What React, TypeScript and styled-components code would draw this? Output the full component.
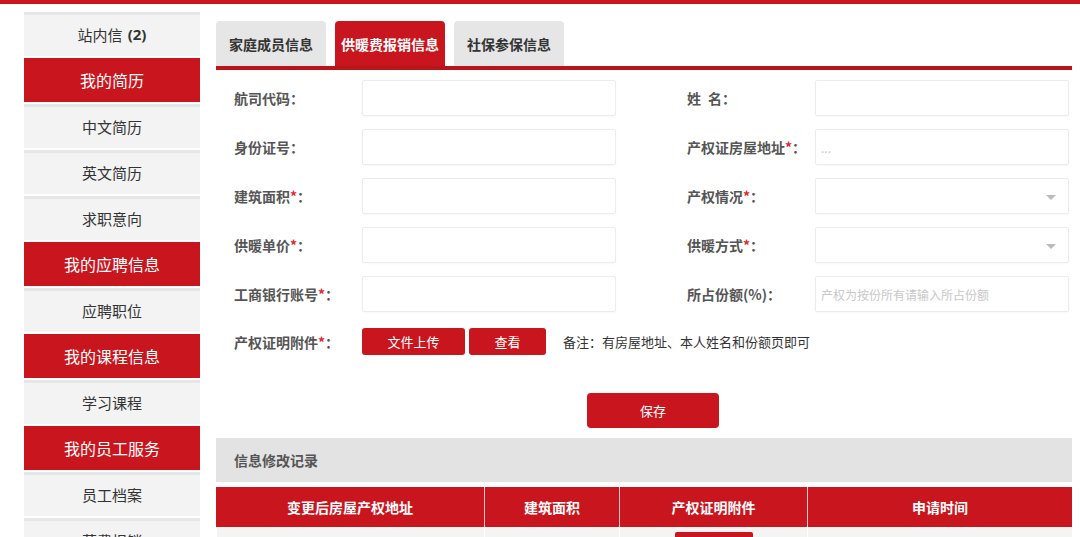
import React from "react";
import styled, { createGlobalStyle } from "styled-components";

const RED = "#c9161e";
const RED_DARK = "#b8141c";

const GlobalStyle = createGlobalStyle`
  body {
    margin: 0;
    background: #fff;
    font-family: "Noto Sans CJK SC", "Noto Sans", "Liberation Sans", sans-serif;
    color: #333;
    overflow: hidden;
  }
  * { box-sizing: border-box; }
`;

const TopBar = styled.div`
  height: 4px;
  background: ${RED};
`;

const Layout = styled.div`
  display: flex;
  gap: 16px;
  padding-left: 24px;
`;

const Sidebar = styled.nav`
  width: 176px;
  flex-shrink: 0;
  display: flex;
  flex-direction: column;
  gap: 2px;
  padding-top: 8px;
`;

const SideItem = styled.div<{ $head?: boolean }>`
  height: 44px;
  display: flex;
  align-items: center;
  justify-content: center;
  font-size: ${(p) => (p.$head ? "16px" : "15px")};
  color: ${(p) => (p.$head ? "#fff" : "#333")};
  background: ${(p) => (p.$head ? RED : "#f3f3f3")};
  box-shadow: ${(p) => (p.$head ? "none" : "inset 0 3px 0 #e6e6e6")};

  b {
    font-weight: 700;
    margin-left: 5px;
    font-family: "Open Sans", "Liberation Sans", sans-serif;
  }
`;

const Main = styled.main`
  width: 856px;
  padding-top: 17px;
`;

const Tabs = styled.div`
  display: flex;
  gap: 9px;
  border-bottom: 4px solid ${RED_DARK};
`;

const Tab = styled.div<{ $active?: boolean }>`
  width: 110px;
  height: 45px;
  display: flex;
  align-items: center;
  justify-content: center;
  border-radius: 4px 4px 0 0;
  font-size: 14px;
  font-weight: 700;
  background: ${(p) => (p.$active ? RED : "#e6e6e6")};
  color: ${(p) => (p.$active ? "#fff" : "#333")};
`;

const Form = styled.div`
  padding: 10px 0 0 18px;
  display: grid;
  grid-template-columns: 382px 382px;
  column-gap: 71px;
  row-gap: 13px;
`;

const Field = styled.div`
  display: flex;
  align-items: center;
`;

const Label = styled.div`
  width: 128px;
  flex-shrink: 0;
  height: 36px;
  display: flex;
  align-items: center;
  font-size: 14px;
  font-weight: 700;
  color: #555;
  white-space: nowrap;

  i {
    font-style: normal;
    color: #e3252d;
  }
`;

const Input = styled.div`
  position: relative;
  flex: 1;
  height: 36px;
  border: 1px solid #ececec;
  border-radius: 2px;
  background: #fff;
  box-shadow: 0 1px 2px rgba(0, 0, 0, 0.03);
  display: flex;
  align-items: center;
  padding-left: 5px;
  font-size: 12px;
  color: #c8c8c8;
  white-space: nowrap;
  overflow: hidden;
`;

const Caret = styled.span`
  position: absolute;
  right: 12px;
  top: 16px;
  width: 0;
  height: 0;
  border-left: 5px solid transparent;
  border-right: 5px solid transparent;
  border-top: 5px solid #bbb;
`;

const UploadRow = styled.div`
  display: flex;
  align-items: center;
  padding: 16px 0 0 18px;
`;

const UploadLabel = styled(Label)`
  height: 27px;
`;

const RedButton = styled.button<{ $w: number }>`
  width: ${(p) => p.$w}px;
  height: 27px;
  margin-right: 4px;
  border: none;
  border-radius: 3px;
  background: ${RED};
  color: #fff;
  font-family: inherit;
  font-size: 13px;
  padding: 0;
`;

const Note = styled.span`
  margin-left: 13px;
  font-size: 13px;
  color: #333;
`;

const SaveWrap = styled.div`
  display: flex;
  padding: 38px 0 0 371px;
`;

const SaveButton = styled(RedButton)`
  height: 35px;
  border-radius: 4px;
`;

const RecordBar = styled.div`
  margin-top: 10px;
  height: 44px;
  background: #e3e3e3;
  display: flex;
  align-items: center;
  padding-left: 18px;
  font-size: 14px;
  font-weight: 700;
  color: #555;
`;

const Table = styled.div`
  margin-top: 5px;
  display: grid;
  grid-template-columns: 268px 135px 188px 265px;
`;

const HeadCell = styled.div`
  height: 40px;
  display: flex;
  align-items: center;
  justify-content: center;
  background: ${RED};
  color: #fff;
  font-size: 14px;
  font-weight: 700;
  border-left: 1px solid #f3c9cb;

  &:first-child {
    border-left: none;
  }
`;

const BodyCell = styled.div`
  height: 40px;
  background: #f4f4f4;
  border-left: 1px solid #fff;
  display: flex;
  justify-content: center;
  padding-top: 5px;

  &:first-child {
    border-left: none;
  }
`;

const MiniButton = styled.span`
  width: 78px;
  height: 26px;
  background: ${RED};
  border-radius: 2px;
`;

const sideItems: { text: string; head?: boolean; count?: string }[] = [
  { text: "站内信", count: "(2)" },
  { text: "我的简历", head: true },
  { text: "中文简历" },
  { text: "英文简历" },
  { text: "求职意向" },
  { text: "我的应聘信息", head: true },
  { text: "应聘职位" },
  { text: "我的课程信息", head: true },
  { text: "学习课程" },
  { text: "我的员工服务", head: true },
  { text: "员工档案" },
  { text: "药费报销" },
];

type FieldDef = { label: string; req?: boolean; select?: boolean; placeholder?: string };

const fields: FieldDef[] = [
  { label: "航司代码" },
  { label: "姓\u2002名" },
  { label: "身份证号" },
  { label: "产权证房屋地址", req: true, placeholder: "..." },
  { label: "建筑面积", req: true },
  { label: "产权情况", req: true, select: true },
  { label: "供暖单价", req: true },
  { label: "供暖方式", req: true, select: true },
  { label: "工商银行账号", req: true },
  { label: "所占份额(%)", placeholder: "产权为按份所有请输入所占份额" },
];

const columns = ["变更后房屋产权地址", "建筑面积", "产权证明附件", "申请时间"];

export default function App() {
  return (
    <>
      <GlobalStyle />
      <TopBar />
      <Layout>
        <Sidebar>
          {sideItems.map((s) => (
            <SideItem key={s.text} $head={s.head}>
              {s.text}
              {s.count && <b>{s.count}</b>}
            </SideItem>
          ))}
        </Sidebar>
        <Main>
          <Tabs>
            <Tab>家庭成员信息</Tab>
            <Tab $active>供暖费报销信息</Tab>
            <Tab>社保参保信息</Tab>
          </Tabs>
          <Form>
            {fields.map((f) => (
              <Field key={f.label}>
                <Label>
                  {f.label}
                  {f.req && <i>*</i>}：
                </Label>
                <Input>
                  {f.placeholder}
                  {f.select && <Caret />}
                </Input>
              </Field>
            ))}
          </Form>
          <UploadRow>
            <UploadLabel>
              产权证明附件<i>*</i>：
            </UploadLabel>
            <RedButton $w={103}>文件上传</RedButton>
            <RedButton $w={77}>查看</RedButton>
            <Note>备注：有房屋地址、本人姓名和份额页即可</Note>
          </UploadRow>
          <SaveWrap>
            <SaveButton $w={132}>保存</SaveButton>
          </SaveWrap>
          <RecordBar>信息修改记录</RecordBar>
          <Table>
            {columns.map((c) => (
              <HeadCell key={c}>{c}</HeadCell>
            ))}
            {columns.map((c, i) => (
              <BodyCell key={c + "-row"}>{i === 2 && <MiniButton />}</BodyCell>
            ))}
          </Table>
        </Main>
      </Layout>
    </>
  );
}
